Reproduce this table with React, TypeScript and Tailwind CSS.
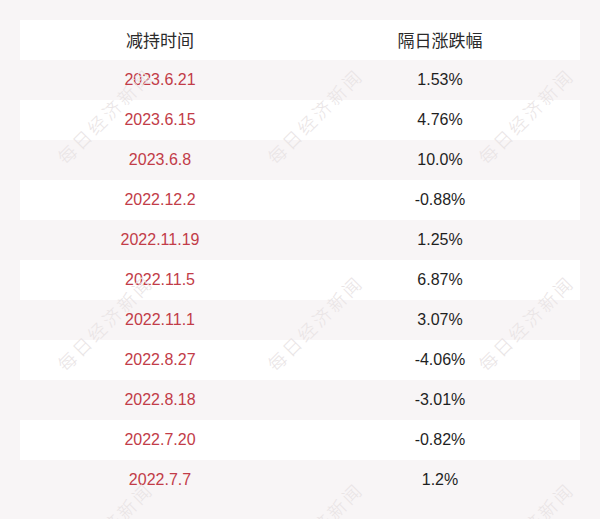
import React from "react";

const rows: [string, string][] = [
  ["2023.6.21", "1.53%"],
  ["2023.6.15", "4.76%"],
  ["2023.6.8", "10.0%"],
  ["2022.12.2", "-0.88%"],
  ["2022.11.19", "1.25%"],
  ["2022.11.5", "6.87%"],
  ["2022.11.1", "3.07%"],
  ["2022.8.27", "-4.06%"],
  ["2022.8.18", "-3.01%"],
  ["2022.7.20", "-0.82%"],
  ["2022.7.7", "1.2%"],
];

const marks = [
  "left-[105px] top-[116px]",
  "left-[315px] top-[116px]",
  "left-[526px] top-[116px]",
  "left-[105px] top-[323px]",
  "left-[315px] top-[323px]",
  "left-[526px] top-[323px]",
  "left-[105px] top-[530px]",
  "left-[315px] top-[530px]",
  "left-[526px] top-[530px]",
];

export default function App() {
  return (
    <div className="relative w-[600px] h-[519px] overflow-hidden bg-[#f8f5f6] px-[20px] pt-[20px] font-['Liberation_Sans','Noto_Sans_CJK_SC',sans-serif]">
      <div className="flex flex-col">
        <div className="grid grid-cols-2 h-[40px] items-center bg-white text-[17px] text-[#2a2a2a] font-['Noto_Sans_CJK_SC',sans-serif]">
          <div className="text-center">减持时间</div>
          <div className="text-center">隔日涨跌幅</div>
        </div>
        {rows.map(([d, p], i) => (
          <div
            key={d}
            className={
              "grid grid-cols-2 h-[40px] items-center text-[16px] " +
              (i % 2 === 1 ? "bg-white" : "bg-transparent")
            }
          >
            <div className="text-center text-[#c23c48]">{d}</div>
            <div className="text-center text-[#1f1f1f]">{p}</div>
          </div>
        ))}
      </div>
      {marks.map((m) => (
        <div
          key={m}
          className={
            "pointer-events-none absolute -translate-x-1/2 -translate-y-1/2 -rotate-45 whitespace-nowrap text-[18px] font-light tracking-[3px] text-[#e9e4e5] font-['Noto_Sans_CJK_SC',serif] " +
            m
          }
        >
          每日经济新闻
        </div>
      ))}
    </div>
  );
}
